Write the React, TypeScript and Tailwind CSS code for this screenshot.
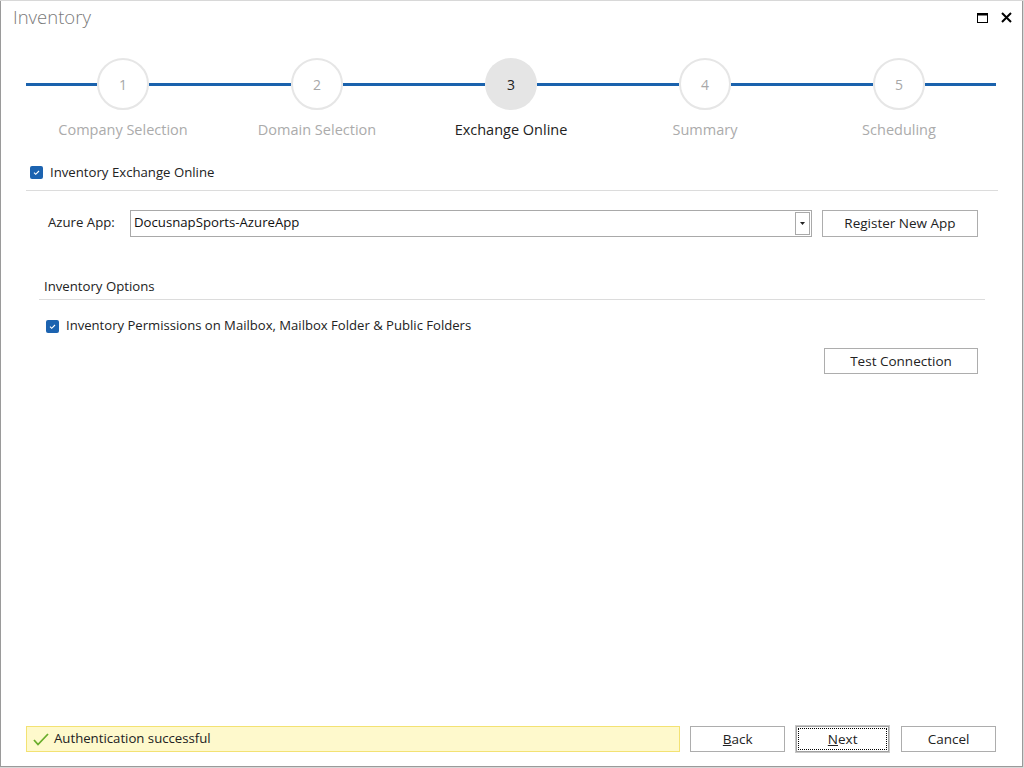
import React from 'react'

const steps = [
  { n: 1, label: 'Company Selection' },
  { n: 2, label: 'Domain Selection' },
  { n: 3, label: 'Exchange Online' },
  { n: 4, label: 'Summary' },
  { n: 5, label: 'Scheduling' },
]

const active = 3

function CheckBox() {
  return (
    <span className="flex h-[13px] w-[13px] items-center justify-center rounded-[2px] bg-[#1c63b0]">
      <svg width="9" height="9" viewBox="0 0 9 9" fill="none">
        <path d="M2 4.6l1.7 1.7L7 3" stroke="white" strokeWidth="1.1" />
      </svg>
    </span>
  )
}

function Button({ children, className = '' }: { children: React.ReactNode; className?: string }) {
  return (
    <button className={`flex h-[26px] items-center justify-center border border-[#adadad] bg-white text-[13.5px] text-[#222] ${className}`}>
      {children}
    </button>
  )
}

export default function App() {
  return (
    <div className="h-[768px] w-[1024px] overflow-hidden bg-[#d8d8d8] pt-[1px] font-['Open_Sans','Noto_Sans',sans-serif]">
      <div className="flex h-[766px] w-[1023px] flex-col border-x border-b border-[#9a9a9a] bg-white">
        {/* Title bar */}
        <div className="flex h-[32px] items-center justify-between pl-[12px] pr-[10px]">
          <span className="text-[18.5px] font-light text-[#7a7a7a]">Inventory</span>
          <div className="flex items-center gap-[13px] pt-[1px]">
            <svg width="11" height="10" viewBox="0 0 11 10">
              <rect x="0.5" y="0.5" width="10" height="9" fill="none" stroke="black" />
              <rect x="0" y="0" width="11" height="2.5" fill="black" />
            </svg>
            <svg width="11" height="11" viewBox="0 0 11 11">
              <path d="M1 1l9 9M10 1l-9 9" stroke="black" strokeWidth="2" />
            </svg>
          </div>
        </div>

        {/* Stepper */}
        <div className="mt-[25px] grid grid-cols-[repeat(5,194px)] pl-[25px]">
          {steps.map((s) => (
            <div key={s.n} className="flex flex-col items-center">
              <div className="flex w-full items-center">
                <div className="h-[3px] flex-1 bg-[#1a62ad]" />
                <div
                  className={`flex h-[52px] w-[52px] items-center justify-center rounded-full text-[14px] ${
                    s.n === active
                      ? 'bg-[#e5e5e5] text-[#222]'
                      : 'border-2 border-[#e6e6e6] bg-white text-[#a8a8a8]'
                  }`}
                >
                  {s.n}
                </div>
                <div className="h-[3px] flex-1 bg-[#1a62ad]" />
              </div>
              <span
                className={`mt-[9px] text-[14.5px] ${s.n === active ? 'text-[#222]' : 'text-[#ababab]'}`}
              >
                {s.label}
              </span>
            </div>
          ))}
        </div>

        {/* Exchange online */}
        <div className="mt-[22px] flex items-center gap-[7px] pl-[29px]">
          <CheckBox />
          <span className="text-[13.2px] text-[#222]">Inventory Exchange Online</span>
        </div>
        <div className="ml-[25px] mr-[24px] mt-[7px] h-px bg-[#dcdcdc]" />

        <div className="mt-[19px] flex items-center pl-[47px] pr-[44px]">
          <span className="w-[82px] text-[13.2px] text-[#222]">Azure App:</span>
          <div className="flex h-[27px] flex-1 items-center justify-between border border-[#a9a9a9] pl-[3px] pr-[1px]">
            <span className="text-[13.2px] text-[#111]">DocusnapSports-AzureApp</span>
            <div className="flex h-[23px] w-[15px] items-center justify-center border border-[#a9a9a9]">
              <svg width="5" height="3" viewBox="0 0 5 3">
                <path d="M0 0h5L2.5 3z" fill="#222" />
              </svg>
            </div>
          </div>
          <Button className="ml-[10px] h-[27px] w-[156px]">Register New App</Button>
        </div>

        {/* Inventory options */}
        <div className="mt-[40px] pl-[43px] text-[13.2px] text-[#222]">Inventory Options</div>
        <div className="ml-[38px] mr-[37px] mt-[3px] h-px bg-[#dcdcdc]" />
        <div className="mt-[16px] flex items-center gap-[7px] pl-[45px]">
          <CheckBox />
          <span className="text-[13.1px] text-[#222]">Inventory Permissions on Mailbox, Mailbox Folder &amp; Public Folders</span>
        </div>
        <div className="mt-[12px] flex justify-end pr-[44px]">
          <Button className="h-[25px] w-[154px]">Test Connection</Button>
        </div>

        {/* Footer */}
        <div className="mt-auto mb-[14px] flex items-center pl-[25px] pr-[26px]">
          <div className="flex h-[26px] w-[655px] items-center gap-[5px] border border-[#f3e273] bg-[#fef9cc] pl-[6px]">
            <svg width="16" height="13" viewBox="0 0 16 13">
              <path d="M1 7l4 4.5L15 1" fill="none" stroke="#6aad2c" strokeWidth="1.8" />
            </svg>
            <span className="text-[13.2px] text-[#222]">Authentication successful</span>
          </div>
          <Button className="ml-[10px] w-[95px]">
            <span><span className="underline">B</span>ack</span>
          </Button>
          <button className="ml-[11px] flex h-[26px] w-[93px] items-center justify-center border border-[#a0a0a0] bg-white p-[1px] text-[13.5px] text-[#222] ring-1 ring-[#c8c8c8]">
            <span className="flex h-full w-full items-center justify-center border border-dotted border-black">
              <span><span className="underline">N</span>ext</span>
            </span>
          </button>
          <Button className="ml-[12px] w-[95px]">Cancel</Button>
        </div>
      </div>
    </div>
  )
}
